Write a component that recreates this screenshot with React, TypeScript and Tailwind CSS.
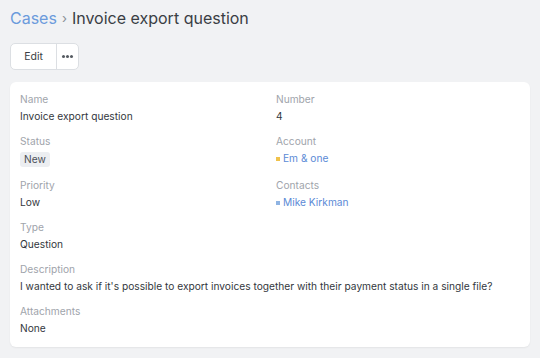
type Field = { label: string; value?: string; badge?: string; link?: string; dot?: string };

const top: Field[] = [
  { label: "Name", value: "Invoice export question" },
  { label: "Number", value: "4" },
  { label: "Status", badge: "New" },
  { label: "Account", link: "Em & one", dot: "bg-[#f0c24b]" },
  { label: "Priority", value: "Low" },
  { label: "Contacts", link: "Mike Kirkman", dot: "bg-[#8fb4e3]" },
];

function FieldRow({ f }: { f: Field }) {
  return (
    <div className="flex flex-col">
      <div className="text-[10.2px] leading-[17px] text-[#a0a4ab]">{f.label}</div>
      {f.value && <div className="text-[10.2px] leading-[17px] text-[#33373d]">{f.value}</div>}
      {f.badge && (
        <div className="flex h-[19px] items-center">
          <span className="rounded-[3px] bg-[#eceef1] px-[4px] text-[10.2px] leading-[15px] text-[#4b5058]">
            {f.badge}
          </span>
        </div>
      )}
      {f.link && (
        <div className="flex h-[18px] items-center gap-[3px] text-[10.2px] text-[#5b8ad6]">
          <span className={`h-[4px] w-[4px] ${f.dot}`} />
          {f.link}
        </div>
      )}
    </div>
  );
}

export default function App() {
  return (
    <div className="min-h-[358px] w-[540px] bg-[#f1f2f4] px-[10px] pt-[5px] font-['Inter',sans-serif]">
      <h1 className="flex items-center gap-[5px] text-[16px] leading-[26px] text-[#3a3e44]">
        <span className="text-[#6b9bdc]">Cases</span>
        <span className="text-[13px] text-[#8a8f96]">›</span>
        <span>Invoice export question</span>
      </h1>

      <div className="mt-[12px] flex h-[27px] w-[69px] overflow-hidden rounded-[5px] border border-[#dcdfe3] bg-white">
        <button className="flex w-[46px] items-center justify-center border-r border-[#dcdfe3] text-[10.5px] text-[#3a3e44]">
          Edit
        </button>
        <button className="flex flex-1 items-center justify-center gap-[1.5px]">
          <span className="h-[2.5px] w-[2.5px] rounded-full bg-[#555a61]" />
          <span className="h-[2.5px] w-[2.5px] rounded-full bg-[#555a61]" />
          <span className="h-[2.5px] w-[2.5px] rounded-full bg-[#555a61]" />
        </button>
      </div>

      <div className="mt-[12px] rounded-[6px] bg-white px-[10px] pb-[10px] pt-[9px] shadow-[0_1px_2px_rgba(0,0,0,0.06)]">
        <div className="grid grid-cols-2 gap-x-[12px] gap-y-[8px]">
          {top.map((f) => (
            <FieldRow key={f.label} f={f} />
          ))}
        </div>
        <div className="mt-[7px] flex flex-col gap-[8px]">
          <FieldRow f={{ label: "Type", value: "Question" }} />
          <FieldRow
            f={{
              label: "Description",
              value:
                "I wanted to ask if it's possible to export invoices together with their payment status in a single file?",
            }}
          />
          <FieldRow f={{ label: "Attachments", value: "None" }} />
        </div>
      </div>
    </div>
  );
}
